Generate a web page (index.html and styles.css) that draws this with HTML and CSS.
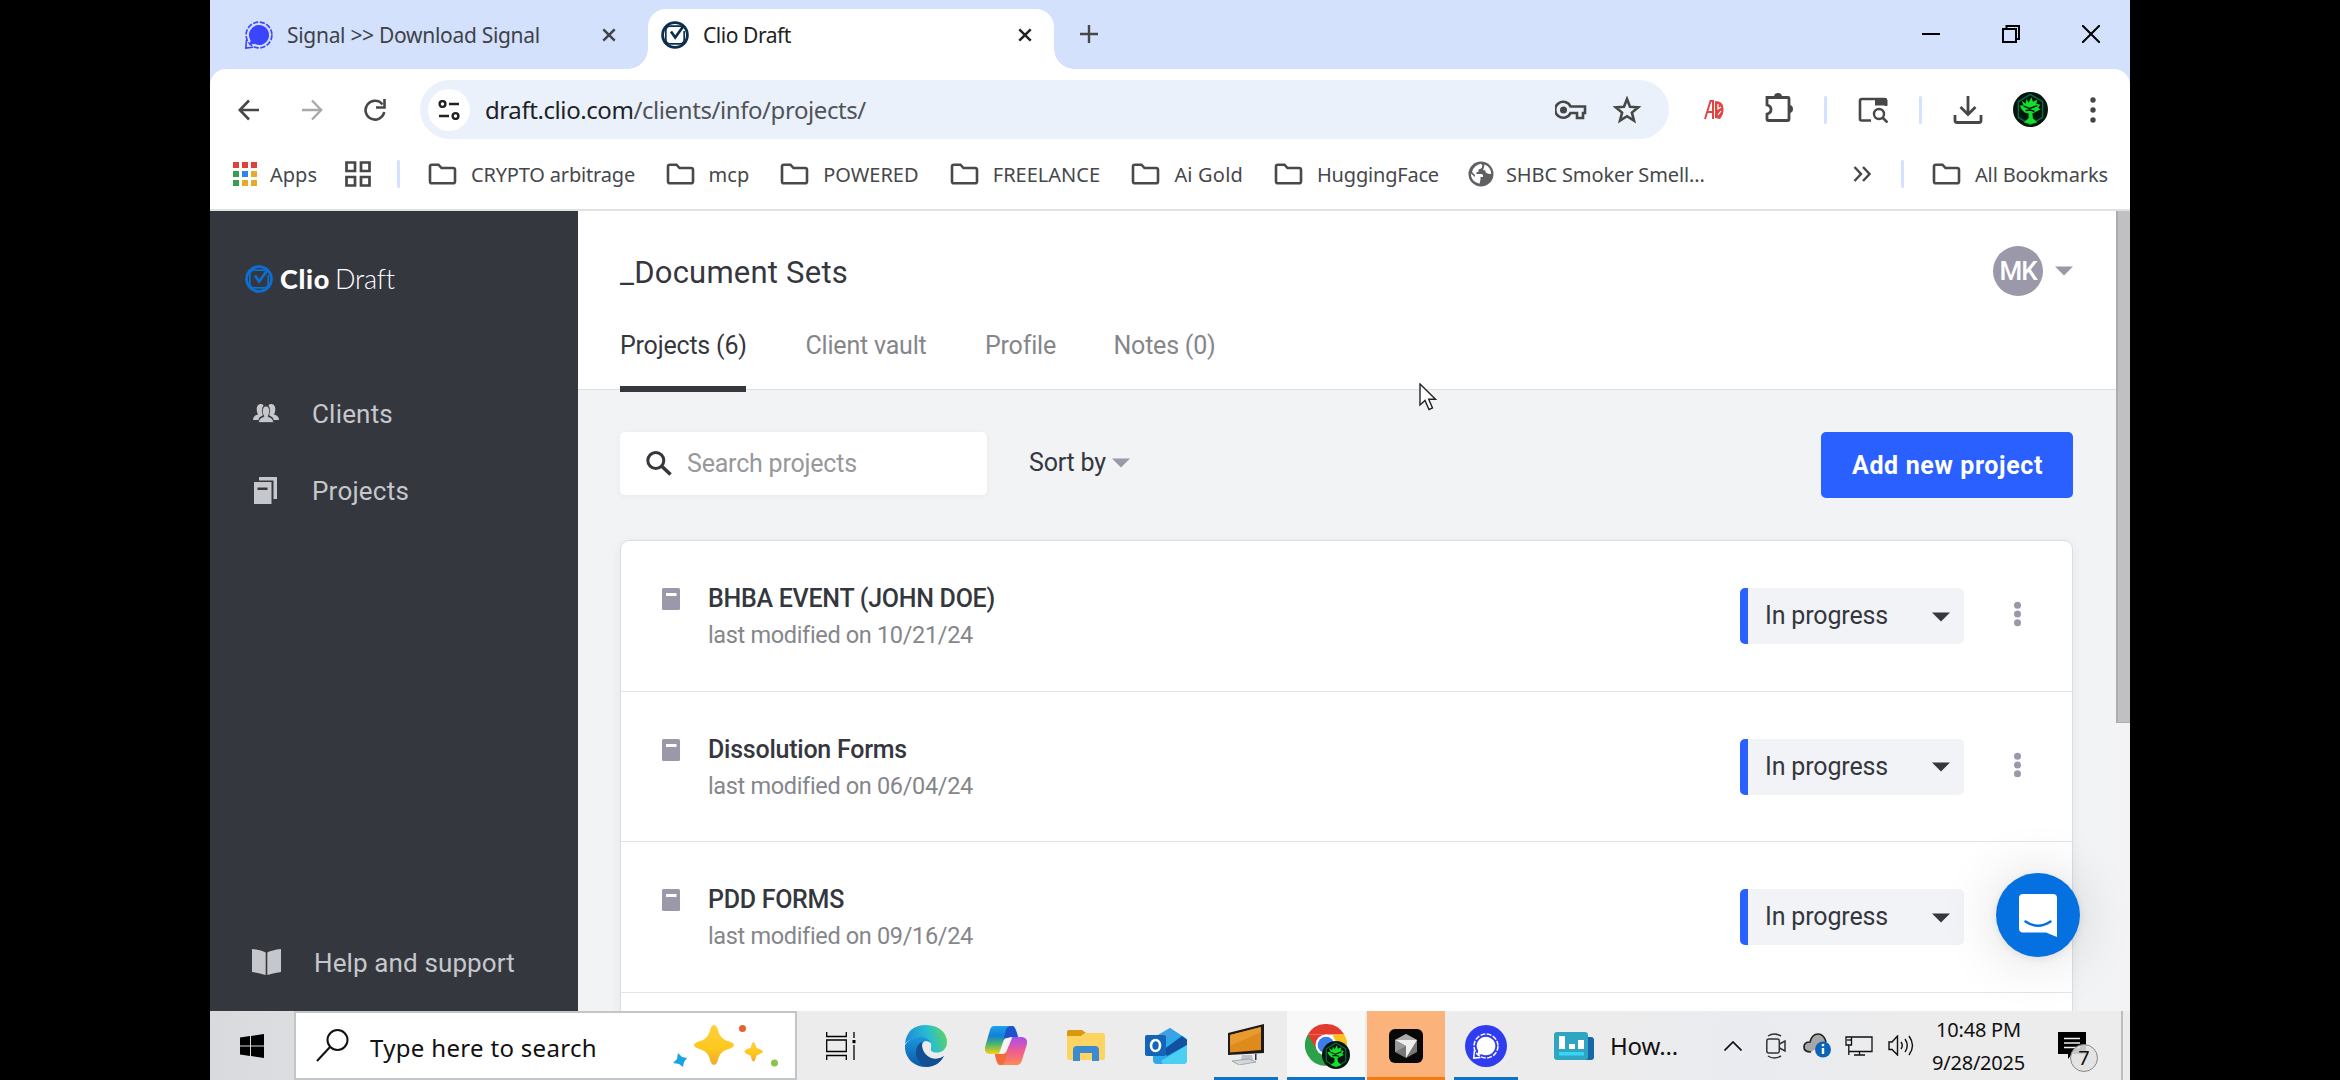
FILE: index.html
```html
<!DOCTYPE html>
<html lang="en">
<head>
<meta charset="utf-8">
<title>Clio Draft</title>
<link rel="stylesheet" href="styles.css">
</head>
<body>
<svg class="defs" width="0" height="0">
  <defs>
    <symbol id="folder" viewBox="0 0 29 22"><path d="M2 18.500V3.500Q2 1.700 3.800 1.700H10.500L13.500 5H25Q27 5 27 7V18.500Q27 20.300 25 20.300H4Q2 20.300 2 18.500Z" fill="none" stroke="#494949" stroke-width="2.600"/></symbol>
    <symbol id="x" viewBox="0 0 14 14"><path d="M1.300 1.300 12.700 12.700M12.700 1.300 1.300 12.700" stroke="currentColor" stroke-width="2.500"/></symbol>
    <symbol id="check" viewBox="0 0 28 28"><circle cx="14" cy="14" r="12.400" fill="none" stroke="currentColor" stroke-width="2.800"/><path d="M22.500 5.200H9Q4.800 5.200 4.800 10V18Q4.800 22.800 9 22.800H19Q23.200 22.800 23.200 18V10" fill="none" stroke="currentColor" stroke-width="1.700"/><path d="M10 10.500 14.200 16.500 22.500 5" fill="none" stroke="currentColor" stroke-width="2.700"/></symbol>
    <symbol id="signal" viewBox="0 0 28 28"><circle cx="14" cy="14" r="12.900" fill="none" stroke="currentColor" stroke-width="1.600" stroke-dasharray="5.200 1.600"/><path d="M14 4A10 10 0 1 1 9.300 22.800L4.500 24 5.600 19.400A10 10 0 0 1 14 4Z" fill="currentColor"/><path d="M1.500 19 .8 27 8 26.300" fill="none" stroke="currentColor" stroke-width="1.600"/></symbol>
    <symbol id="caret" viewBox="0 0 18 10"><path d="M0 .5H18L9 9.500Z" fill="currentColor"/></symbol>
    <symbol id="doc" viewBox="0 0 18 22"><rect width="18" height="22" rx="1.500" fill="#9a98a9"/><rect x="4" y="5" width="10.500" height="3" fill="#fff"/></symbol>
    <symbol id="tree" viewBox="0 0 36 36"><circle cx="18" cy="18" r="18" fill="#03150c"/><path d="M18 2.500 30.500 10V26L18 33.500 5.500 26V10Z" fill="none" stroke="#0b6b45" stroke-width="1.500"/><path d="M9 18 7 14 11 14 9 9 13 12 14 7 16 11 19 5.500 20.500 10 25 8 24 12 28 13 26 16 28 18 24 20 20 22 20.500 27 25 31 18 33 11 31 16 27 16 22 12 21Z" fill="#12e12b"/><path d="M11 14.500 17 17 25 14M13 19 18 18.500 22 20" stroke="#03150c" stroke-width="1.500" fill="none"/></symbol>
  </defs>
</svg>
<div class="desktop">
  <header class="tabstrip">
    <div class="tab tab-idle"><svg class="fav blue"><use href="#signal"/></svg><span class="t w-signal">Signal &gt;&gt; Download Signal</span><svg class="x"><use href="#x"/></svg></div>
    <div class="tab tab-active"><svg class="fav navy"><use href="#check"/></svg><span class="t w-clio">Clio Draft</span><svg class="x"><use href="#x"/></svg></div>
    <svg class="plus" viewBox="0 0 18 18"><path d="M9 0V18M0 9H18" stroke="#474747" stroke-width="2.400"/></svg>
    <div class="window-buttons">
      <svg viewBox="0 0 18 18"><path d="M0 9H18" stroke="#000" stroke-width="2"/></svg>
      <svg viewBox="0 0 18 18"><path d="M1 4H14V17H1ZM4.500 4V1H17V14H14" fill="none" stroke="#000" stroke-width="2"/></svg>
      <svg viewBox="0 0 18 18"><path d="M0 0 18 18M18 0 0 18" stroke="#000" stroke-width="2"/></svg>
    </div>
  </header>
  <div class="chrome">
    <div class="toolbar">
      <svg class="nav" viewBox="0 0 22 22"><path d="M21 11H2M11 1.500 1.800 11 11 20.500" fill="none" stroke="#474747" stroke-width="2.600"/></svg>
      <svg class="nav" viewBox="0 0 22 22"><path d="M1 11H20M11 1.500 20.200 11 11 20.500" fill="none" stroke="#a9a9a9" stroke-width="2.400"/></svg>
      <svg class="nav" viewBox="0 0 22 22"><path d="M18.500 5.500A9.400 9.400 0 1 0 20.200 13" fill="none" stroke="#474747" stroke-width="2.600"/><path d="M20.500 0V8.500H12" fill="none" stroke="#474747" stroke-width="2.600"/></svg>
      <div class="omnibox">
        <div class="siteinfo"><svg viewBox="0 0 22 20"><g fill="none" stroke="#222" stroke-width="2.400"><circle cx="4.500" cy="4" r="2.900"/><path d="M11 4H21M1 16H11"/><circle cx="17.500" cy="16" r="2.900"/></g></svg></div>
        <span class="t w-url">draft.clio.com<span class="path">/clients/info/projects/</span></span>
        <svg class="key" viewBox="0 0 32 20"><path d="M15.500 6.500H30V13H28V18H22V13H15.500A8 8 0 1 1 15.500 6.500Z" fill="none" stroke="#474747" stroke-width="2.600"/><circle cx="8.500" cy="10" r="3.500" fill="#474747"/></svg>
        <svg class="star" viewBox="0 0 28 28"><path d="M14 3 17 10.700 25.200 11.300 18.900 16.600 21 24.700 14 20.200 7 24.700 9.100 16.600 2.800 11.300 11 10.700Z" fill="none" stroke="#474747" stroke-width="2.600"/></svg>
      </div>
      <svg class="ad" viewBox="0 0 20 20"><path d="M1 19 6.500 1H9V19M3 12H9" fill="none" stroke="#e24545" stroke-width="2"/><path d="M11 1Q19 1 19.500 8 20 14 16 19L11 18Z" fill="#e24545"/><path d="M14 4V9L17 7M14 15 17 11" stroke="#fff" stroke-width="1.200" fill="none"/></svg>
      <svg class="puzzle" viewBox="0 0 28 30"><path d="M2 4.500H23Q24 4.500 24 6V26Q24 27.500 22.500 27.500H3.500Q2 27.500 2 26V21Q6 20 6 16.500T2 12Z" fill="none" stroke="#474747" stroke-width="2.800"/><path d="M9 4A4 4 0 0 1 17 4ZM24 12A4 4 0 0 1 24 20Z" fill="#474747"/></svg>
      <i class="sep s1"></i>
      <svg class="lens" viewBox="0 0 30 26"><path d="M13 23.500H3.500Q2 23.500 2 22V4Q2 2 4 2H26Q28 2 28 4V9" fill="none" stroke="#474747" stroke-width="2.600"/><path d="M17 1H27Q29.300 1 29.300 3V8.500H17Z" fill="#474747"/><circle cx="21" cy="17" r="5" fill="none" stroke="#474747" stroke-width="2.400"/><path d="M24.500 20.500 29.500 25.500" stroke="#474747" stroke-width="2.600"/></svg>
      <i class="sep s2"></i>
      <svg class="dl" viewBox="0 0 30 28"><path d="M15 0V17M7.500 11 15 18.500 22.500 11M2 19V24.500Q2 26.500 4 26.500H26Q28 26.500 28 24.500V19" fill="none" stroke="#474747" stroke-width="2.800"/></svg>
      <svg class="me"><use href="#tree"/></svg>
      <svg class="dots" viewBox="0 0 6 26"><g fill="#474747"><circle cx="3" cy="3" r="2.700"/><circle cx="3" cy="13" r="2.700"/><circle cx="3" cy="23" r="2.700"/></g></svg>
    </div>
    <nav class="bookmarks">
      <a><svg class="apps" viewBox="0 0 24 24"><path d="M0 0h6v6H0zM9 0h6v6H9zM18 0h6v6H18z" fill="#e04038"/><path d="M0 9h6v6H0zM0 18h6v6H0z" fill="#34a04f"/><path d="M9 9h6v6H9z" fill="#2f86ea"/><path d="M18 9h6v6H18zM9 18h6v6H9zM18 18h6v6H18z" fill="#e9a928"/></svg><span class="t w-apps">Apps</span></a>
      <svg class="groups" viewBox="0 0 26 26"><path d="M1.500 1.500H10V10H1.500ZM16 1.500H24.500V10H16ZM1.500 16H10V24.500H1.500ZM16 16H24.500V24.500H16Z" fill="none" stroke="#474747" stroke-width="2.700"/></svg>
      <i class="sep"></i>
      <a><svg class="folder"><use href="#folder"/></svg><span class="t w-crypto">CRYPTO arbitrage</span></a>
      <a><svg class="folder"><use href="#folder"/></svg><span class="t w-mcp">mcp</span></a>
      <a><svg class="folder"><use href="#folder"/></svg><span class="t w-powered">POWERED</span></a>
      <a><svg class="folder"><use href="#folder"/></svg><span class="t w-free">FREELANCE</span></a>
      <a><svg class="folder"><use href="#folder"/></svg><span class="t w-gold">Ai Gold</span></a>
      <a><svg class="folder"><use href="#folder"/></svg><span class="t w-hug">HuggingFace</span></a>
      <a class="site"><svg class="globe" viewBox="0 0 26 26"><circle cx="13" cy="13" r="12.500" fill="#5f6063"/><path d="M13 2.800Q15 4 14 6.500 13 8 10.500 8.500V11H8.500V13H14Q15.500 14 15 16H12.500V18.500Q12 20.500 11.500 22.800 3 21 2.800 12.500L7 16V14L4 11Q6 4 13 2.800ZM16.500 3.500Q23 6 23.200 13 20 13 18.500 12T17.500 9.500L15 9Q16 7 16.500 3.500Z" fill="#fff"/></svg><span class="t w-shbc">SHBC Smoker Smell...</span></a>
      <svg class="more" viewBox="0 0 18 16"><path d="M1.500 1 8 8 1.500 15M10 1 16.500 8 10 15" fill="none" stroke="#474747" stroke-width="2.400"/></svg>
      <i class="sep s3"></i>
      <a class="all"><svg class="folder"><use href="#folder"/></svg><span class="t w-all">All Bookmarks</span></a>
    </nav>
  </div>
  <div class="app">
    <aside class="sidebar">
      <div class="logo"><svg class="fav"><use href="#check"/></svg><b class="t w-l1">Clio</b><span class="t w-l2">Draft</span></div>
      <a class="side clients"><svg class="side-icon" viewBox="0 0 26 20"><g fill="#c6c7cc"><path d="M0 17Q0 12.500 5 11.500 3 8 4 4 5 .5 8.500 1 10 1 10.500 2.500 8 6 10 11 10.500 12.500 7 14 5.500 15 5.500 17ZM26 17Q26 12.500 21 11.500 23 8 22 4 21 .5 17.500 1 16 1 15.500 2.500 18 6 16 11 15.500 12.500 19 14 20.500 15 20.500 17Z"/><path d="M5.500 19.500Q5.500 15 11 13.500 9 10.500 9.300 7 10 3 13 3T16.700 7Q17 10.500 15 13.500 20.500 15 20.500 19.500Z" stroke="#35373e" stroke-width=".7"/></g></svg><span class="t w-cl">Clients</span></a>
      <a class="side projects"><svg class="side-icon tall" viewBox="0 0 24 27"><path d="M6 0H24V22H20.500V3.500H6Z" fill="#c6c7cc"/><path d="M1 5H18.500V27H1Z" fill="#c6c7cc"/><path d="M4.500 10.500H14.500V13H4.500Z" fill="#35373e"/></svg><span class="t w-pr">Projects</span></a>
      <a class="side help"><svg class="side-icon book" viewBox="0 0 29 26"><path d="M0 0Q9 1 13.700 3.500V26Q7 24 0 23ZM29 0Q20 1 15.300 3.500V26Q22 24 29 23Z" fill="#c6c7cc"/></svg><span class="t w-help">Help and support</span></a>
    </aside>
    <main class="main">
      <div class="head">
        <div class="head-top">
          <h1 class="t w-h1">_Document Sets</h1>
          <div class="user"><span class="avatar">MK</span><svg class="caret"><use href="#caret"/></svg></div>
        </div>
        <div class="tabs"><a class="on"><span class="t w-t1">Projects (6)</span></a><a><span class="t w-t2">Client vault</span></a><a><span class="t w-t3">Profile</span></a><a><span class="t w-t4">Notes (0)</span></a></div>
      </div>
      <div class="controls">
        <div class="search"><svg viewBox="0 0 26 25"><circle cx="9.800" cy="9.500" r="8" fill="none" stroke="#35373e" stroke-width="3"/><path d="M15.500 15 24.500 23.500" stroke="#35373e" stroke-width="3.600"/></svg><span class="t w-sp">Search projects</span></div>
        <div class="sort"><span class="t w-sort">Sort by</span><svg class="caret"><use href="#caret"/></svg></div>
        <button><span class="t w-add">Add new project</span></button>
      </div>
      <div class="list">
        <div class="row"><svg class="doc"><use href="#doc"/></svg><div class="info"><strong class="t w-r1">BHBA EVENT (JOHN DOE)</strong><span class="t w-mod">last modified on 10/21/24</span></div><div class="status"><span class="t w-in">In progress</span><svg class="caret"><use href="#caret"/></svg></div><i class="kebab"></i></div>
        <div class="row"><svg class="doc"><use href="#doc"/></svg><div class="info"><strong class="t w-r2">Dissolution Forms</strong><span class="t w-mod">last modified on 06/04/24</span></div><div class="status"><span class="t w-in">In progress</span><svg class="caret"><use href="#caret"/></svg></div><i class="kebab"></i></div>
        <div class="row"><svg class="doc"><use href="#doc"/></svg><div class="info"><strong class="t w-r3">PDD FORMS</strong><span class="t w-mod">last modified on 09/16/24</span></div><div class="status"><span class="t w-in">In progress</span><svg class="caret"><use href="#caret"/></svg></div><i class="kebab"></i></div>
      </div>
    </main>
    <div class="scroll"><div class="thumb"></div></div>
    <div class="chat"><svg viewBox="0 0 38 43"><path d="M4 0H34Q38 0 38 4V43L27 38.500H4Q0 38.500 0 34.500V4Q0 0 4 0Z" fill="#fff"/><path d="M6.500 27.500Q19 36 31.500 27.500" fill="none" stroke="#0571e0" stroke-width="2.500" stroke-linecap="round"/></svg></div>
    <svg class="pointer" viewBox="0 0 18 28"><path d="M1 1V22L6 17.500 10 26.500 13.500 25 9.700 16.300H16.500Z" fill="#fff" stroke="#222" stroke-width="1.400"/></svg>
  </div>
  <footer class="taskbar">
    <div class="start"><svg viewBox="0 0 24 24"><path d="M0 3.500 10 2V11.500H0ZM11 1.900 24 0V11.500H11ZM0 12.500H10V22L0 20.500ZM11 12.500H24V24L11 22.100Z"/></svg></div>
    <div class="tsearch">
      <svg class="mag" viewBox="0 0 33 33"><circle cx="21.500" cy="11" r="10" fill="none" stroke="#111" stroke-width="2"/><path d="M14 18 1 32" stroke="#111" stroke-width="2"/></svg>
      <span class="t w-type">Type here to search</span>
      <svg class="sparks" viewBox="0 0 106 44"><defs><linearGradient id="gold" x2="0" y2="1"><stop stop-color="#ffcf3f"/><stop offset=".6" stop-color="#fcc81c"/><stop offset="1" stop-color="#f0a92c"/></linearGradient></defs><path d="M41 1Q44 1 45.500 8 47.500 14 53 16.500 61 18.500 61 21T53 26Q47.500 28 45.500 34 44 41 41 41T36.500 34Q34.500 28 29 26 21 23.500 21 21T29 16.500Q34.500 14 36.500 8 38 1 41 1Z" fill="url(#gold)"/><path d="M80.500 18Q82 18 83.500 24 90 26 90 27.500T83.500 31.500Q82 37.500 80.500 37.500T77.500 31.500Q71.500 29.500 71.500 27.500T77.500 24Q79 18 80.500 18Z" fill="url(#gold)"/><path d="M5 29 9 33 14 34 11 38 10 43 6 40 0 39 4 35Z" fill="#17a4e5"/><circle cx="69.500" cy="4.500" r="3.500" fill="#e56332"/><circle cx="101.500" cy="39" r="3.500" fill="#88c54b"/></svg>
    </div>
    <svg class="taskview" viewBox="0 0 30 28"><path d="M.7 0V4.500H20.300V0M.7 8H20.300V19.500H.7ZM.7 28V23.500H20.300V28M28 0V6M28 13V28" fill="none" stroke="#000" stroke-width="1.300"/><path d="M26.500 8H29.500V11.200H26.500Z"/></svg>
    <svg class="i-edge" viewBox="0 0 42 42"><defs><linearGradient id="e1" y1=".2"><stop stop-color="#1e8ed6"/><stop offset=".5" stop-color="#28bcd3"/><stop offset="1" stop-color="#64d84f"/></linearGradient><linearGradient id="e2" x2="0" y2="1"><stop stop-color="#1998dc"/><stop offset="1" stop-color="#0d58a8"/></linearGradient></defs><path d="M0 19Q2 0 21 0C35 0 42 9 42 17 42 26 34 29 28 27 24 25 27 23 26 19 23 11 8 10 0 19Z" fill="url(#e1)"/><path d="M0 20Q6 11 16 12 24 13 26 18 19 13 17 20C14 31 27 39 39 31Q33 42 21 42C9 42-1 33 0 20Z" fill="url(#e2)"/><path d="M17 17C7 22 10 38 22 42Q34 41 39 31C31 37 16 33 17 17Z" fill="#124f94"/></svg>
    <svg class="i-copilot" viewBox="0 0 42 39"><defs><linearGradient id="c1" x2="0" y2="1"><stop stop-color="#1aa3ef"/><stop offset=".35" stop-color="#117fd5"/><stop offset=".65" stop-color="#4fb56c"/><stop offset="1" stop-color="#f7d315"/></linearGradient><linearGradient id="c2" x2="0" y2="1"><stop stop-color="#a64ef0"/><stop offset=".5" stop-color="#ee5c91"/><stop offset="1" stop-color="#ff8a55"/></linearGradient></defs><path d="M9 0H28Q31 1 33 11H26L22 12 14 28H4Q-1 27 0 21L5 4Q6 0 9 0Z" fill="url(#c1)"/><path d="M21 3Q24-1 28 0 30 1 33 11H25Q20 12 18 17Z" fill="#1d52ce"/><path d="M33 39H14Q11 37 10 28H17L21 26 27 11H37Q43 12 42 18L37 34Q36 38 33 39Z" fill="url(#c2)"/><path d="M10 28H18Q22 27 24 22L20 35Q19 39 15 39 12 38 10 28Z" fill="#f26b3f"/><path d="M22 12H27L21 26Q20 28 17 28H14L18 16Q19 12 22 12Z" fill="#f4f4f4"/></svg>
    <svg class="i-files" viewBox="0 0 38 32"><path d="M0 2Q0 0 2 0H15L19 3 15 8H0Z" fill="#d8980f"/><path d="M0 6H14L18 3H36Q38 3 38 5V28Q38 30 36 30H2Q0 30 0 28Z" fill="#fcd462"/><path d="M6 31V20Q6 16 10 16H28Q32 16 32 20V31H25V23H13V31Z" fill="#3c8ad0"/></svg>
    <svg class="i-outlook" viewBox="0 0 42 36"><path d="M8 10 25 0 42 11V32Q42 36 38 36H12Q8 36 8 32Z" fill="#2ea8e8"/><path d="M8 10 25 0 32 5 13 18Z" fill="#3f9fe2"/><path d="M18 22 37 8 42 12V17L22 28Z" fill="#1250a0"/><path d="M16 33 42 17V32Q42 36 38 36H18Z" fill="#4bd0f4"/><rect y="7" width="21" height="21" rx="2" fill="#1465b8"/><ellipse cx="10.500" cy="17.500" rx="4.500" ry="5.500" fill="none" stroke="#fff" stroke-width="2.600"/></svg>
    <div class="task pc"><svg viewBox="0 0 38 41"><path d="M1 9 37 0V29L1 31Z" fill="#1d1a18"/><path d="M3 11 34 3V26L3 28.500Z" fill="#df8b1c"/><path d="M3 11 34 3V8L3 22Z" fill="#e89a2e"/><path d="M15 31H25L26 36H14Z" fill="#bcc2c7"/><path d="M5 37 22 35 29 38 12 41Z" fill="#d3d8dc" stroke="#8d9499" stroke-width=".7"/><path d="M28 30V36H29.500V30Z" fill="#333"/></svg></div>
    <div class="task gchrome"><svg viewBox="0 0 46 46"><path d="M2.800 10.500A21 21 0 0 1 39.200 10.500H21Z" fill="#e33b2e"/><path d="M2.800 10.500A21 21 0 0 0 21 42L30 26Z" fill="#2da04c"/><path d="M39.200 10.500A21 21 0 0 1 21 42L30 26 28 10.500Z" fill="#fbc116"/><path d="M2.800 10.500 12 26 21 10.500Z" fill="#e33b2e"/><circle cx="21" cy="21" r="10.500" fill="#fff"/><circle cx="21" cy="21" r="8.300" fill="#3b7ded"/><svg x="17" y="17" width="28" height="28"><use href="#tree"/></svg></svg></div>
    <div class="task cursor-app"><svg viewBox="0 0 34 34"><rect width="34" height="34" rx="6" fill="#080808"/><path d="M17 5 28 11V23L17 29 6 23V11Z" fill="#777"/><path d="M6 11 17 5 28 11 17 14Z" fill="#aaa"/><path d="M6 11H28L17 29V17Z" fill="#eee"/><path d="M6 11V23L17 17Z" fill="#999"/></svg></div>
    <div class="task sig"><svg viewBox="0 0 42 42"><circle cx="21" cy="21" r="21" fill="#303cf0"/><svg class="white" x="8" y="8" width="26" height="26"><use href="#signal"/></svg></svg></div>
    <svg class="i-news" viewBox="0 0 40 28"><rect x="28" y="5" width="12" height="23" rx="3" fill="#1767a8"/><rect width="34" height="28" rx="3" fill="#30a5c2"/><path d="M5 4H11V17H5ZM15 12H21V17H15ZM24 8H30V17H24Z" fill="#fff"/><path d="M5 20H30V23.500H5Z" fill="#38d6f4"/></svg>
    <span class="t w-how">How...</span>
    <svg class="i-up" viewBox="0 0 18 10"><path d="M.5 9.500 9 1 17.500 9.500" fill="none" stroke="#111" stroke-width="1.700"/></svg>
    <svg class="i-cam" viewBox="0 0 20 26"><g fill="none" stroke="#333" stroke-width="1.500"><rect x=".8" y="6" width="12.500" height="14" rx="2"/><path d="M13.500 11 19 8V18L13.500 15M2 3Q8-1 15 3M2 23Q8 27 15 23"/></g></svg>
    <svg class="i-cloud" viewBox="0 0 28 25"><path d="M8 19Q1 19 1 14T7 9Q9 1 15 1T23 9" fill="#a7a7a7" stroke="#222" stroke-width="1.700"/><circle cx="20" cy="16.500" r="8" fill="#0c64b5"/><path d="M20 15V21M20 11V13.300" stroke="#fff" stroke-width="2.400"/></svg>
    <svg class="i-net" viewBox="0 0 28 20"><path d="M7 1H27V15.500H4M1 1H6.500V9H1ZM3.800 9V19M14.500 16V19M9 19H20M3 3V5M5 3V5" fill="none" stroke="#111" stroke-width="1.300"/></svg>
    <svg class="i-vol" viewBox="0 0 27 21"><path d="M1 7H4L9.500 1V20L4 14.500H1ZM13 7Q15.500 10.500 13 14M17 4Q21.500 10.500 17 17M21 1Q28 10.500 21 20" fill="none" stroke="#111" stroke-width="1.400"/></svg>
    <div class="clock"><span class="t w-time">10:48 PM</span><span class="t w-date">9/28/2025</span></div>
    <div class="notif"><svg viewBox="0 0 28 28"><path d="M0 0H28V22H14L10 27V22H0Z"/><path d="M6 6.500H22M6 11H22M6 15.500H22" stroke="#eee" stroke-width="1.500"/></svg><span class="count">7</span></div>
    <i class="peek"></i>
  </footer>
</div>
</body>
</html>
```

FILE: styles.css
```css
* { box-sizing: border-box; }
body { margin: 0; width: 2340px; height: 1080px; overflow: hidden; background: #000; font-family: "Noto Sans", sans-serif; }
.defs { position: absolute; }
svg { display: block; flex: none; }
.t { display: block; flex: none; white-space: nowrap; }
.desktop { width: 1920px; height: 1080px; margin: 0 auto; display: flex; flex-direction: column; background: #d3e1fd; overflow: hidden; }

/* tab strip */
.tabstrip { height: 69px; flex: none; display: flex; padding-top: 9px; color: #3f4247; font-size: 21px; }
.tab { display: flex; align-items: center; height: 60px; padding-bottom: 9px; }
.tab-idle { width: 438px; padding-left: 35px; }
.tab-active { position: relative; width: 406px; padding-left: 13px; background: #fff; border-radius: 18px 18px 0 0; color: #222; }
.tab-active::before, .tab-active::after { content: ""; position: absolute; bottom: 0; width: 20px; height: 20px; }
.tab-active::before { left: -20px; background: radial-gradient(circle at 0 0, transparent 19.5px, #fff 20px); }
.tab-active::after { right: -20px; background: radial-gradient(circle at 100% 0, transparent 19.5px, #fff 20px); }
.fav { width: 28px; height: 28px; margin-right: 14px; }
.blue { color: #3b45fd; }
.navy { color: #0c2e4c; }
.x { width: 14px; height: 14px; }
.tab-idle .x { margin-left: 63px; }
.tab-active .x { margin-left: 228px; }
.tab .t { margin-top: 1px; }
.w-signal { width: 252px; letter-spacing: -0.300px; }
.w-clio { width: 87px; letter-spacing: -0.450px; }
.plus { width: 18px; height: 18px; margin: 16px 0 0 26px; }
.window-buttons { display: flex; gap: 62px; margin: 16px 30px 0 auto; }
.window-buttons svg { width: 18px; height: 18px; }

/* toolbar */
.chrome { height: 142px; flex: none; background: #fff; border-radius: 16px 16px 0 0; border-bottom: 2px solid #e0e1e1; }
.toolbar { height: 81px; display: flex; align-items: center; padding-left: 28px; }
.nav { width: 22px; height: 22px; margin-right: 41px; }
.omnibox { width: 1249px; height: 59px; margin-left: -7px; border-radius: 30px; background: #eaf1fb; display: flex; align-items: center; padding-left: 8px; font-size: 24px; color: #202124; }
.siteinfo { width: 42px; height: 42px; border-radius: 50%; background: #fff; display: flex; align-items: center; justify-content: center; margin-right: 15px; }
.siteinfo svg { width: 22px; height: 20px; }
.path { color: #505358; }
.w-url { width: 380px; letter-spacing: -0.420px; }
.key { width: 32px; height: 20px; margin-left: 690px; }
.star { width: 28px; height: 28px; margin-left: 26px; }
.ad { width: 20px; height: 20px; margin-left: 35px; }
.puzzle { width: 28px; height: 30px; margin: 0 0 4px 41px; }
.sep { width: 3px; height: 28px; flex: none; border-radius: 2px; background: #d3e3fd; }
.s1 { margin-left: 31px; }
.lens { width: 30px; height: 26px; margin-left: 31px; }
.s2 { margin-left: 31px; }
.dl { width: 30px; height: 28px; margin-left: 31px; }
.me { width: 35px; height: 35px; margin-left: 30px; }
.dots { width: 6px; height: 26px; margin-left: 42px; }

.bookmarks { height: 48px; display: flex; align-items: center; padding-left: 23px; font-size: 20px; color: #45484b; }
.bookmarks a { display: flex; align-items: center; margin-left: 31.600px; }
.bookmarks a:first-child { margin-left: 0; }
.apps { width: 24px; height: 24px; margin-right: 13px; }
.groups { width: 26px; height: 26px; margin: 0 26px 0 29px; }
.bookmarks .sep + a { margin-left: 28px; }
.folder { width: 29px; height: 22px; margin-right: 14px; }
.bookmarks .site { margin-left: 30px; }
.globe { width: 26px; height: 26px; margin-right: 12px; }
.w-apps { width: 46px; }
.w-crypto { width: 163px; letter-spacing: -0.180px; }
.w-mcp { width: 40px; }
.w-powered { width: 95px; letter-spacing: 0; }
.w-free { width: 107px; }
.w-gold { width: 68px; letter-spacing: 0.200px; }
.w-hug { width: 121px; letter-spacing: -0.190px; }
.w-shbc { width: 199px; letter-spacing: -0.120px; }
.w-all { width: 132px; letter-spacing: -0.130px; }
.more { width: 18px; height: 16px; margin-left: 148px; }
.s3 { margin-left: 30px; }
.bookmarks .all { margin-left: 27.500px; }

/* application */
.app { position: relative; height: 800px; flex: none; display: flex; background: #f2f3f5; font-family: Roboto, sans-serif; color: #35373e; overflow: hidden; }
.sidebar { width: 368px; flex: none; display: flex; flex-direction: column; background: #35373e; color: #c6c7cc; font-size: 26px; }
.logo { display: flex; align-items: center; height: 30px; margin: 53px 0 0 35px; font: 27px/30px Lato, sans-serif; color: #fff; }
.logo .fav { margin-right: 7px; color: #0b6fd3; }
.logo b { font-weight: 900; margin-right: 6px; }
.logo span { font-weight: 300; }
.w-l1 { width: 49px; letter-spacing: 0.700px; }
.w-l2 { width: 58px; letter-spacing: -0.200px; }
.side { display: flex; align-items: center; height: 40px; }
.side-icon { width: 26px; height: 20px; }
.tall { width: 24px; height: 27px; }
.book { width: 29px; height: 26px; }
.clients { margin: 99px 0 0 43px; gap: 33px; }
.projects { margin: 37px 0 0 43px; gap: 35px; }
.help { margin: auto 0 29px 42px; gap: 33px; }
.side .t { margin-top: 1px; }
.w-cl { width: 80px; letter-spacing: 0.190px; }
.w-pr { width: 96px; letter-spacing: 0.210px; }
.w-help { width: 200px; letter-spacing: 0.120px; }

.main { width: 1538px; flex: none; display: flex; flex-direction: column; }
.head { height: 179px; flex: none; background: #fff; border-bottom: 1px solid #dedfe1; padding: 30px 43px 0 42px; }
.head-top { height: 60px; display: flex; align-items: center; }
h1 { margin: 3px 0 0; font-size: 31px; line-height: 60px; font-weight: 400; }
.w-h1 { width: 227px; letter-spacing: 0.220px; }
.user { display: flex; align-items: center; margin-left: auto; color: #9a98a9; }
.avatar { width: 50px; height: 50px; border-radius: 50%; background: #9a98a9; color: #fff; font-size: 26px; font-weight: 500; line-height: 50px; text-align: center; letter-spacing: -1px; margin-right: 12px; }
.caret { width: 18px; height: 10px; }
.tabs { display: flex; gap: 59.500px; font-size: 25px; color: #85868a; }
.tabs a { height: 91px; line-height: 89px; }
.tabs .on { color: #35373e; border-bottom: 6px solid #35373e; }
.w-t1 { width: 126px; letter-spacing: -0.200px; }
.w-t2 { width: 120px; letter-spacing: -0.200px; }
.w-t3 { width: 69px; letter-spacing: -0.200px; }
.w-t4 { width: 101px; letter-spacing: -0.220px; }
.controls { height: 66px; flex: none; display: flex; margin: 42px 43px 0 42px; font-size: 25px; }
.search { width: 367px; height: 63px; border-radius: 5px; background: #fff; box-shadow: 0 1px 6px rgba(50,50,70,.05); display: flex; align-items: center; padding-left: 26px; color: #97989b; }
.search svg { width: 26px; height: 25px; margin-right: 15px; }
.w-sp { width: 169px; letter-spacing: -0.200px; }
.sort { display: flex; align-items: center; height: 61px; margin-left: 42px; }
.sort .caret { margin-left: 7px; color: #9a98a9; }
.w-sort { width: 76px; letter-spacing: -0.190px; }
button { margin-left: auto; width: 252px; height: 66px; border: 0; border-radius: 5px; background: #2a60ff; color: #fff; font: 700 25px Roboto, sans-serif; padding: 0 31px; }
.w-add { width: 190px; letter-spacing: 0.620px; }
.list { height: 560px; flex: none; margin: 42px 43px 0 42px; background: #fff; border: 1px solid #dcdde0; border-radius: 9px; box-shadow: 0 2px 12px rgba(50,50,70,.06); }
.row { height: 150.500px; display: flex; align-items: flex-start; padding: 47px 0 0 41px; border-bottom: 1.500px solid #e3e4e6; }
.doc { width: 18px; height: 22px; margin-right: 28px; }
.info { width: 1032px; flex: none; display: flex; flex-direction: column; margin-top: -8px; font-size: 23.500px; line-height: 37px; color: #85868a; }
.info strong { font-size: 25px; font-weight: 500; color: #35373e; }
.w-r1 { width: 286px; letter-spacing: -0.270px; }
.w-r2 { width: 198px; letter-spacing: -0.240px; }
.w-r3 { width: 135px; letter-spacing: -0.280px; }
.w-mod { width: 263px; letter-spacing: -0.340px; }
.status { width: 224px; height: 56px; border-left: 8px solid #2a60ff; border-radius: 5px; background: #f2f3f6; display: flex; align-items: center; padding-left: 17px; font-size: 25px; }
.status .caret { margin: 1px 0 0 45px; }
.w-in { width: 122px; margin-bottom: 1px; letter-spacing: -0.150px; }
.kebab { width: 7px; height: 7px; margin: 23px 0 0 50px; border-radius: 50%; background: #9a98a9; box-shadow: 0 -8.700px #9a98a9, 0 8.700px #9a98a9; transform: translateY(-0.500px); }
.scroll { width: 14px; background: #f3f3f5; }
.thumb { height: 512px; background: #c0c0c3; border-left: 2px solid #acacaf; border-bottom: 1px solid #acacaf; }
.chat { position: absolute; left: 1786px; top: 662px; width: 84px; height: 84px; border-radius: 50%; background: #0571e0; display: flex; align-items: center; justify-content: center; box-shadow: 0 2px 60px rgba(0,0,0,.14), 0 2px 8px rgba(0,0,0,.08); }
.chat svg { width: 38px; height: 43px; }
.pointer { position: absolute; left: 1209px; top: 172px; width: 18px; height: 28px; }

/* taskbar */
.taskbar { height: 69px; flex: none; display: flex; align-items: center; background: linear-gradient(90deg, #d8dadd, #ececec 500px, #ececec 1400px, #e9ebf0 1530px, #ececec 1700px); color: #111; }
.start { width: 84px; display: flex; justify-content: center; }
.start svg { width: 24px; height: 24px; }
.tsearch { width: 503px; height: 69px; border: 2px solid #c4c5c7; background: #fff; display: flex; align-items: center; padding-left: 20px; font-size: 24px; }
.mag { width: 33px; height: 33px; margin-right: 21px; }
.w-type { width: 226px; margin-top: 3px; letter-spacing: 0.320px; }
.sparks { width: 106px; height: 44px; margin-left: 77px; }
.taskview { width: 30px; height: 28px; margin-left: 29px; }
.i-edge { width: 42px; height: 42px; margin-left: 49px; }
.i-copilot { width: 42px; height: 39px; margin-left: 38px; }
.i-files { width: 38px; height: 32px; margin-left: 40px; }
.i-outlook { width: 42px; height: 36px; margin-left: 40px; }
.task { height: 69px; flex: none; border-bottom: 3px solid #0f74c6; display: flex; align-items: center; justify-content: center; }
.pc { width: 64px; margin-left: 27px; }
.pc svg { width: 38px; height: 41px; }
.gchrome { width: 78px; margin-left: 9px; background: #f8f8f8; }
.gchrome svg { width: 46px; height: 46px; margin: 5px 0 0 4px; }
.gchrome svg svg { width: 28px; height: 28px; }
.cursor-app { width: 78px; margin-left: 2px; background: #fbb27b; border-color: #f47b12; }
.cursor-app svg { width: 34px; height: 34px; margin-top: 3px; }
.sig { width: 64px; margin-left: 9px; }
.sig svg { width: 42px; height: 42px; margin-top: 3px; }
.sig .white { width: 26px; height: 26px; color: #fff; }
.i-news { width: 40px; height: 28px; margin-left: 36px; }
.w-how { width: 67px; margin-left: 16px; font-size: 24px; letter-spacing: -0.170px; }
.i-up { width: 18px; height: 10px; margin-left: 47px; }
.i-cam { width: 20px; height: 26px; margin-left: 24px; }
.i-cloud { width: 28px; height: 25px; margin-left: 17px; }
.i-net { width: 28px; height: 20px; margin-left: 14px; }
.i-vol { width: 27px; height: 21px; margin-left: 15px; }
.clock { width: 92px; margin-left: 17px; display: flex; flex-direction: column; align-items: center; font-size: 20px; line-height: 33px; }
.w-time { width: 84px; letter-spacing: -0.200px; }
.w-date { width: 92px; letter-spacing: -0.220px; }
.notif { position: relative; width: 28px; margin-left: 34px; }
.notif svg { width: 28px; height: 28px; }
.count { position: absolute; left: 12px; top: 12px; width: 28px; height: 28px; border: 1px solid #888; border-radius: 50%; background: rgba(225,225,225,.88); font-size: 20px; line-height: 26px; text-align: center; }
.peek { width: 2px; height: 69px; margin-left: 35px; background: #bdbdbd; }
```
